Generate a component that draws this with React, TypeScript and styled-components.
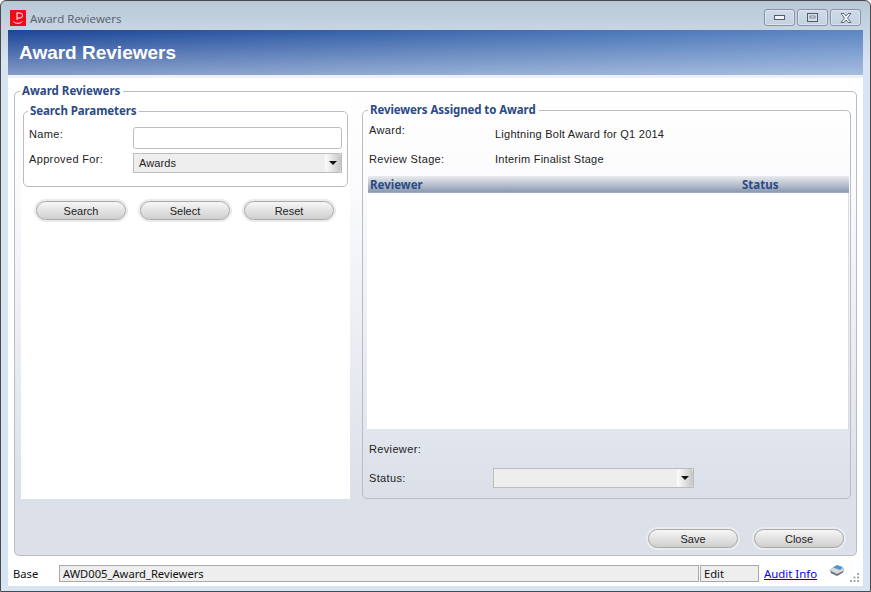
import styled, { createGlobalStyle } from "styled-components";

const GlobalStyle = createGlobalStyle`
  html, body { margin: 0; padding: 0; background: #fff; }
  * { box-sizing: border-box; }
`;

const Frame = styled.div`
  width: 871px;
  height: 592px;
  display: flex;
  flex-direction: column;
  border: 1px solid #4a4a4a;
  border-radius: 6px 6px 0 0;
  background: linear-gradient(#b9c8d6 0, #d7e4f2 60px, #d7e4f2 100%);
  font-family: "Liberation Sans", Arial, sans-serif;
  overflow: hidden;
`;

const TitleBar = styled.div`
  height: 29px;
  flex: none;
  display: flex;
  align-items: center;
  padding: 4px 9px 0 9px;
`;

const Caption = styled.span`
  margin-left: 4px;
  padding-top: 1px;
  font-family: "Open Sans", sans-serif;
  font-size: 11.5px;
  color: #555c66;
`;

const WinButtons = styled.div`
  margin-left: auto;
  display: flex;
  gap: 2px;
`;

const WinButton = styled.div`
  width: 31px;
  height: 17px;
  display: flex;
  align-items: center;
  justify-content: center;
  border: 1px solid #8793aa;
  border-radius: 3px;
  background: linear-gradient(#cfdbe7, #c3d1e0);
  box-shadow: inset 0 0 0 1px #dbe5ef;
`;

const Client = styled.div`
  flex: 1;
  margin: 0 7px 5px;
  display: flex;
  flex-direction: column;
  background: #fff;
`;

const Banner = styled.div`
  height: 45px;
  flex: none;
  display: flex;
  align-items: center;
  padding-left: 11px;
  background: linear-gradient(97deg, #1b4597 0%, #3f6cb0 55%, #5c86c4 100%);
  position: relative;
  color: #fff;
  font-size: 19px;
  font-weight: bold;

  &::after {
    content: "";
    position: absolute;
    inset: 0;
    background: linear-gradient(rgba(255, 255, 255, 0), rgba(255, 255, 255, 0.46));
  }
`;

const BannerText = styled.span`
  position: relative;
  z-index: 1;
`;

const BannerEdge = styled.div`
  height: 3px;
  flex: none;
  background: #edf0f4;
`;

const Body = styled.div`
  flex: 1;
  padding: 5px 6px 0 6px;
  display: flex;
  flex-direction: column;
`;

const Group = styled.fieldset`
  margin: 0;
  min-width: 0;
  padding: 0;
  border: 1px solid #b9bcc2;
  border-radius: 5px;
`;

const MainGroup = styled(Group)`
  height: 473px;
  flex: none;
  background: linear-gradient(#fff 0, #fbfbfd 90px, #dbe0e9 400px);
  display: flex;
  flex-direction: column;
`;

const Legend = styled.legend<{ $inset: number }>`
  margin-left: ${(p) => p.$inset}px;
  padding: 0 3px 0 2px;
  font-family: "Noto Sans", sans-serif;
  font-size: 11.5px;
  line-height: 16px;
  font-weight: bold;
  color: #2b4a84;
`;

const SubLegend = styled(Legend)`
  letter-spacing: -0.1px;
`;

const Columns = styled.div`
  display: flex;
  align-items: flex-start;
  padding: 0 6px 0 6px;
  gap: 12px;
`;

const LeftColumn = styled.div`
  width: 329px;
  height: 400px;
  flex: none;
  padding: 4px 2px 0 2px;
  background: #fff;
`;

const SearchGroup = styled(Group)`
  height: 84px;
  padding: 8px 4px 0 5px;
`;

const FieldRow = styled.div`
  display: flex;
  align-items: flex-start;
`;

const SearchRow = styled(FieldRow)`
  margin-bottom: 4px;
`;

const Label = styled.div<{ $width: number; $shift?: number }>`
  width: ${(p) => p.$width}px;
  flex: none;
  margin-top: ${(p) => p.$shift ?? 0}px;
  font-size: 11px;
  line-height: 14px;
  letter-spacing: 0.35px;
  color: #222;
`;

const TextInput = styled.div`
  width: 209px;
  height: 22px;
  background: #fff;
  border: 1px solid #bdbdbd;
  border-radius: 3px;
`;

const Combo = styled.div<{ $width: number }>`
  width: ${(p) => p.$width}px;
  height: 20px;
  display: flex;
  align-items: center;
  justify-content: space-between;
  padding-left: 5px;
  background: #eeeeee;
  border: 1px solid #bdbdbd;
  font-size: 11px;
  letter-spacing: 0.1px;
  color: #222;
`;

const ComboArrow = styled.div`
  width: 16px;
  height: 18px;
  display: flex;
  align-items: center;
  justify-content: center;
  background: linear-gradient(90deg, #fdfdfd, #c6c6c6);
  border-radius: 3px;

  &::before {
    content: "";
    border-style: solid;
    border-width: 4px 4px 0 4px;
    border-color: #111 transparent transparent transparent;
  }
`;

const ButtonRow = styled.div<{ $gap: number; $pad: string }>`
  display: flex;
  gap: ${(p) => p.$gap}px;
  padding: ${(p) => p.$pad};
`;

const PillButton = styled.button`
  width: 90px;
  height: 19px;
  padding: 0;
  border: 1px solid #a9a9a9;
  border-radius: 10px;
  background: linear-gradient(#f6f6f6, #cfcfcf);
  box-shadow: 0 0 0 2px #e9ebef;
  font-family: "Liberation Sans", Arial, sans-serif;
  font-size: 11px;
  letter-spacing: 0;
  color: #222;
`;

const AssignGroup = styled(Group)`
  width: 489px;
  height: 397px;
  margin-top: 3px;
  flex: none;
  padding: 0 1px 0 4px;
  display: flex;
  flex-direction: column;
`;

const InfoBlock = styled.div`
  height: 58px;
  flex: none;
  padding: 9px 0 0 2px;
`;

const InfoRow = styled(FieldRow)`
  height: 25px;
`;

const InfoValue = styled.div`
  font-size: 11px;
  line-height: 14px;
  letter-spacing: 0.25px;
  color: #222;
`;

const GridHead = styled.div`
  height: 17px;
  flex: none;
  margin-left: 1px;
  display: flex;
  align-items: center;
  padding-left: 2px;
  background: linear-gradient(#e9ebef, #b4bdcb 55%, #8d9cb3 92%, #a9b5c9 100%);
  font-family: "Noto Sans", sans-serif;
  font-size: 11.5px;
  font-weight: bold;
  color: #2b4a84;
`;

const GridHeadCell = styled.div<{ $width: number }>`
  width: ${(p) => p.$width}px;
`;

const GridBody = styled.div`
  height: 236px;
  flex: none;
  background: #fff;
  border-right: 1px solid #d8dbe1;
`;

const BottomFields = styled.div`
  padding: 13px 0 0 2px;
  display: flex;
  flex-direction: column;
  gap: 12px;
`;

const StatusBar = styled.div`
  margin: 8px 0 0 -1px;
  height: 18px;
  flex: none;
  display: flex;
  align-items: center;
  font-family: "Noto Sans", sans-serif;
  font-size: 11.2px;
  color: #111;
`;

const BaseLabel = styled.div`
  width: 46px;
  flex: none;
`;

const StatusCell = styled.div<{ $width: number }>`
  width: ${(p) => p.$width}px;
  height: 17px;
  flex: none;
  display: flex;
  align-items: center;
  padding-left: 3px;
  margin-right: 1px;
  background: #eeeeee;
  border: 1px solid #a9a9a9;
`;

const AuditLink = styled.a`
  margin-left: 4px;
  width: 53px;
  flex: none;
  color: #0000ee;
  text-decoration: underline;
  white-space: nowrap;
  font-size: 11.4px;
`;

const TrayBox = styled.div`
  width: 30px;
  height: 18px;
  margin-left: 3px;
  flex: none;
  display: flex;
  justify-content: flex-end;
  padding-right: 5px;
  background: #fff;
`;

const Grip = styled.div`
  flex: 1;
  display: flex;
  justify-content: flex-end;
  align-self: flex-end;
  padding-right: 1px;
`;

function Logo() {
  return (
    <svg width="16" height="16" viewBox="0 0 16 16">
      <rect width="16" height="16" fill="#f5071b" />
      <path d="M7 2.5V10M7 3h3a2.3 2.3 0 0 1 0 5H7" fill="none" stroke="#fff" strokeWidth="1" />
      <path d="M3.5 11.5c1.5 2.4 7 2.4 9 0" fill="none" stroke="#fff" strokeWidth="1" />
    </svg>
  );
}

function MinIcon() {
  return (
    <svg width="12" height="6" viewBox="0 0 12 6">
      <rect x="0.5" y="0.5" width="10" height="4" fill="#f2f4f7" stroke="#4f5a6e" />
    </svg>
  );
}

function MaxIcon() {
  return (
    <svg width="11" height="9" viewBox="0 0 11 9">
      <rect x="0.5" y="0.5" width="10" height="8" fill="#d6dfe9" stroke="#4f5a6e" />
      <rect x="3" y="3" width="5" height="2" fill="#f2f4f7" stroke="#4f5a6e" strokeWidth="0.7" />
    </svg>
  );
}

function CloseIcon() {
  return (
    <svg width="12" height="10" viewBox="0 0 12 10">
      <path d="M1 .5h3L6 3l2-2.500h3L7.500 5 11 9.500H8L6 7 4 9.500H1L4.500 5z" fill="#eef1f5" stroke="#5a6476" strokeWidth="0.9" />
    </svg>
  );
}

function TrayIcon() {
  return (
    <svg width="16" height="13" viewBox="0 0 16 13">
      <path d="M1 6l6-4 8 3-1 3-6 3-6-2z" fill="#d8dadd" stroke="#8a8f96" strokeWidth="0.5" />
      <path d="M4 3.500L8 1l6 2-3 3z" fill="#4f94d6" />
      <path d="M2 7l6 3 6-3v1.500L8 12 2 9z" fill="#6b7078" />
    </svg>
  );
}

function GripIcon() {
  return (
    <svg width="10" height="10" viewBox="0 0 10 10" fill="#a5a8ad">
      <rect x="7" y="1" width="2" height="2" />
      <rect x="3.500" y="4.500" width="2" height="2" />
      <rect x="7" y="4.500" width="2" height="2" />
      <rect x="0" y="8" width="2" height="2" />
      <rect x="3.500" y="8" width="2" height="2" />
      <rect x="7" y="8" width="2" height="2" />
    </svg>
  );
}

export default function App() {
  return (
    <>
      <GlobalStyle />
      <Frame>
        <TitleBar>
          <Logo />
          <Caption>Award Reviewers</Caption>
          <WinButtons>
            <WinButton><MinIcon /></WinButton>
            <WinButton><MaxIcon /></WinButton>
            <WinButton><CloseIcon /></WinButton>
          </WinButtons>
        </TitleBar>
        <Client>
          <Banner><BannerText>Award Reviewers</BannerText></Banner>
          <BannerEdge />
          <Body>
            <MainGroup>
              <Legend $inset={5}>Award Reviewers</Legend>
              <Columns>
                <LeftColumn>
                  <SearchGroup>
                    <SubLegend $inset={-1}>Search Parameters</SubLegend>
                    <SearchRow>
                      <Label $width={104}>Name:</Label>
                      <TextInput />
                    </SearchRow>
                    <FieldRow>
                      <Label $width={104} $shift={-1}>Approved For:</Label>
                      <Combo $width={209}>
                        Awards
                        <ComboArrow />
                      </Combo>
                    </FieldRow>
                  </SearchGroup>
                  <ButtonRow $gap={14} $pad="14px 0 0 13px">
                    <PillButton>Search</PillButton>
                    <PillButton>Select</PillButton>
                    <PillButton>Reset</PillButton>
                  </ButtonRow>
                </LeftColumn>
                <AssignGroup>
                  <SubLegend $inset={1}>Reviewers Assigned to Award</SubLegend>
                  <InfoBlock>
                    <InfoRow>
                      <Label $width={126} $shift={-4}>Award:</Label>
                      <InfoValue>Lightning Bolt Award for Q1 2014</InfoValue>
                    </InfoRow>
                    <InfoRow>
                      <Label $width={126}>Review Stage:</Label>
                      <InfoValue>Interim Finalist Stage</InfoValue>
                    </InfoRow>
                  </InfoBlock>
                  <GridHead>
                    <GridHeadCell $width={372}>Reviewer</GridHeadCell>
                    <GridHeadCell $width={60}>Status</GridHeadCell>
                  </GridHead>
                  <GridBody />
                  <BottomFields>
                    <FieldRow>
                      <Label $width={126}>Reviewer:</Label>
                    </FieldRow>
                    <FieldRow>
                      <Label $width={124} $shift={3}>Status:</Label>
                      <Combo $width={201}>
                        <span />
                        <ComboArrow />
                      </Combo>
                    </FieldRow>
                  </BottomFields>
                </AssignGroup>
              </Columns>
              <ButtonRow $gap={16} $pad="30px 0 0 633px">
                <PillButton>Save</PillButton>
                <PillButton>Close</PillButton>
              </ButtonRow>
            </MainGroup>
            <StatusBar>
              <BaseLabel>Base</BaseLabel>
              <StatusCell $width={640}>AWD005_Award_Reviewers</StatusCell>
              <StatusCell $width={59}>Edit</StatusCell>
              <AuditLink>Audit Info</AuditLink>
              <TrayBox><TrayIcon /></TrayBox>
              <Grip><GripIcon /></Grip>
            </StatusBar>
          </Body>
        </Client>
      </Frame>
    </>
  );
}
